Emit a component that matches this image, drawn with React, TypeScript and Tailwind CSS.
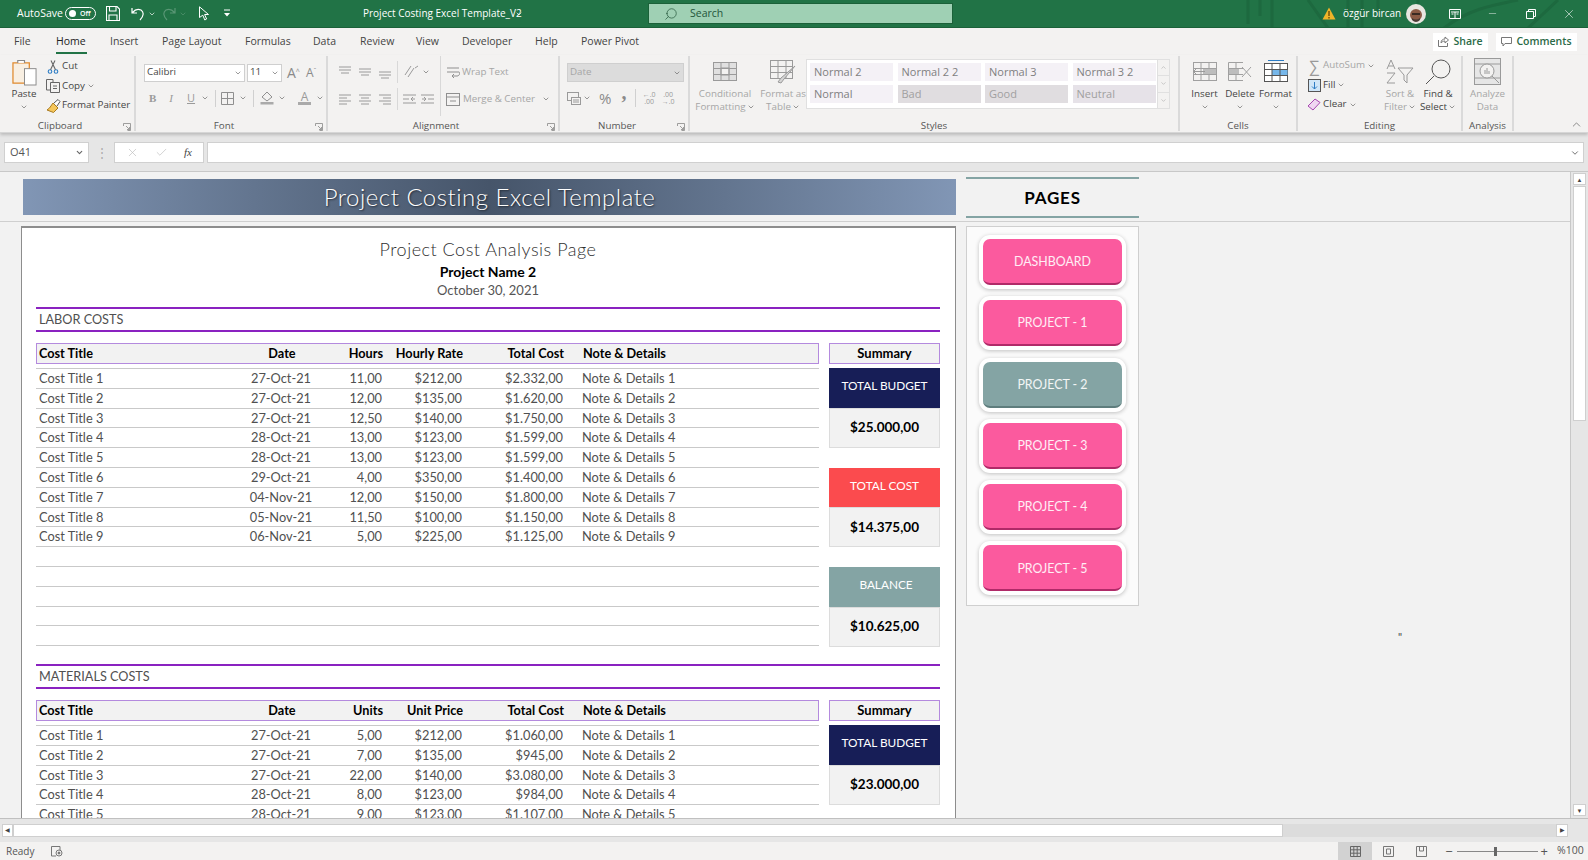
import React from "react";
import { ChevronDown, ChevronUp, Search, Minus, X, Check } from "lucide-react";

const labor = [
  ["Cost Title 1","27-Oct-21","11,00","$212,00","$2.332,00","Note & Details 1"],
  ["Cost Title 2","27-Oct-21","12,00","$135,00","$1.620,00","Note & Details 2"],
  ["Cost Title 3","27-Oct-21","12,50","$140,00","$1.750,00","Note & Details 3"],
  ["Cost Title 4","28-Oct-21","13,00","$123,00","$1.599,00","Note & Details 4"],
  ["Cost Title 5","28-Oct-21","13,00","$123,00","$1.599,00","Note & Details 5"],
  ["Cost Title 6","29-Oct-21","4,00","$350,00","$1.400,00","Note & Details 6"],
  ["Cost Title 7","04-Nov-21","12,00","$150,00","$1.800,00","Note & Details 7"],
  ["Cost Title 8","05-Nov-21","11,50","$100,00","$1.150,00","Note & Details 8"],
  ["Cost Title 9","06-Nov-21","5,00","$225,00","$1.125,00","Note & Details 9"],
  ["","","","","",""],["","","","","",""],["","","","","",""],["","","","","",""],["","","","","",""],
];
const materials = [
  ["Cost Title 1","27-Oct-21","5,00","$212,00","$1.060,00","Note & Details 1"],
  ["Cost Title 2","27-Oct-21","7,00","$135,00","$945,00","Note & Details 2"],
  ["Cost Title 3","27-Oct-21","22,00","$140,00","$3.080,00","Note & Details 3"],
  ["Cost Title 4","28-Oct-21","8,00","$123,00","$984,00","Note & Details 4"],
  ["Cost Title 5","28-Oct-21","9,00","$123,00","$1.107,00","Note & Details 5"],
];
const gridCols = "grid grid-cols-[204px_82px_60px_80px_101px_256px]";

const Chev = ({ className = "" }: { className?: string }) => (
  <ChevronDown size={8} strokeWidth={2} className={"text-[#666] " + className} />
);

const Launcher = () => (
  <svg width="8" height="8" viewBox="0 0 8 8" className="absolute right-[3px] bottom-[0px] text-[#888]" fill="none" stroke="currentColor" strokeWidth="0.8">
    <path d="M0.5 3V0.5H7.5V7.5H4.5M3 3L6.5 6.5M6.5 4V6.5H4" />
  </svg>
);

function Group({ w, label, launcher, children }: { w: string; label: string; launcher?: boolean; children: React.ReactNode }) {
  return (
    <div className={`${w} relative shrink-0 flex flex-col border-r-2 border-[#dadada] my-[1px]`}>
      <div className="flex-1 min-h-0 flex">{children}</div>
      <div className={`h-[15px] text-center text-[9.8px] leading-[20px] text-[#555] ${launcher ? "pr-[14px]" : ""}`}>{label}</div>
      {launcher && <Launcher />}
    </div>
  );
}

function Lines({ kind }: { kind: "left" | "center" | "right" | "top" | "mid" | "bot" }) {
  const d = {
    left: "M1 3H13M1 6H9M1 9H13M1 12H9",
    center: "M1 3H13M3 6H11M1 9H13M3 12H11",
    right: "M1 3H13M5 6H13M1 9H13M5 12H13",
    top: "M1 2H13M1 5H13M3 8H11",
    mid: "M1 4H13M1 7H13M3 10H11",
    bot: "M1 7H13M1 10H13M3 13H11",
  }[kind];
  return (
    <svg width="14" height="15" viewBox="0 0 14 15" fill="none" stroke="#9a9a9a" strokeWidth="1"><path d={d} /></svg>
  );
}

function TitleBar() {
  return (
    <div className="relative h-[28px] shrink-0 bg-[#217346] flex items-center text-white text-[10.5px] border-b border-[#1b6139] overflow-hidden">
      <svg width="340" height="28" viewBox="0 0 340 28" className="absolute right-[10px] top-0" fill="none" stroke="#1d693f" strokeWidth="3">
        <path d="M10 0V24M22 0V16M34 0V28M70 0L90 28M110 0V28M124 0V28M140 0V20M180 0V28M206 28C230 10 250 6 280 0M290 28L320 0" />
      </svg>
      <span className="ml-[17px] w-[48px]">AutoSave</span>
      <div className="w-[31px] h-[13px] rounded-full border border-white flex items-center pl-[3px] gap-[4px]">
        <div className="w-[7px] h-[7px] rounded-full bg-white" />
        <span className="text-[7px] leading-none font-semibold">Off</span>
      </div>
      <svg className="ml-[10px]" width="14" height="15" viewBox="0 0 14 15" fill="none" stroke="#fff" strokeWidth="1.1">
        <path d="M0.5 0.5H11L13.5 3V14.5H0.5ZM3.5 0.5V5H10V0.5M3 14.5V9H11V14.5" />
      </svg>
      <svg className="ml-[11px]" width="14" height="14" viewBox="0 0 14 14" fill="none" stroke="#fff" strokeWidth="1.2">
        <path d="M1 1V6H6M1.5 5.5C4 2.5 7 1.5 10 3C13 5 13 9 9 13" />
      </svg>
      <Chev className="ml-[3px] !text-white" />
      <svg className="ml-[6px] opacity-25" width="14" height="14" viewBox="0 0 14 14" fill="none" stroke="#fff" strokeWidth="1.2">
        <path d="M13 1V6H8M12.5 5.5C10 2.5 7 1.5 4 3C1 5 1 9 5 13" />
      </svg>
      <Chev className="ml-[3px] !text-white opacity-25" />
      <svg className="ml-[11px]" width="12" height="15" viewBox="0 0 12 15" fill="none" stroke="#fff" strokeWidth="1">
        <path d="M1.5 0.8L10.5 8.5H6.6L8.6 13L6.8 14L4.8 9.2L1.5 11.5Z" />
      </svg>
      <svg className="ml-[13px]" width="8" height="9" viewBox="0 0 8 9" fill="#fff"><path d="M1 0.5H7V1.5H1ZM1 4H7L4 7.5Z" /></svg>
      <span className="ml-[132px] w-[152px] text-[10px] whitespace-nowrap">Project Costing Excel Template_V2</span>
      <Chev className="!text-white" />
      <div className="ml-[125px] w-[305px] h-[21px] bg-[#9fd0b4] border border-[#1b6139] flex items-center text-[#23553a]">
        <Search size={14} strokeWidth={1.2} className="ml-[15px] -scale-x-100" />
        <span className="ml-[12px] text-[10.5px]">Search</span>
      </div>
      <svg className="ml-[369px] relative" width="14" height="13" viewBox="0 0 14 13"><path d="M7 0.5L13.5 12.5H0.5Z" fill="#f0b429" /><path d="M7 4V9M7 10V11.5" stroke="#5a3d00" strokeWidth="1.2" /></svg>
      <span className="ml-[7px] w-[55px] relative whitespace-nowrap text-[10px]">özgür bircan</span>
      <svg className="ml-[8px] relative" width="20" height="20" viewBox="0 0 20 20">
        <circle cx="10" cy="10" r="10" fill="#e8e6e0" />
        <circle cx="10" cy="11" r="6" fill="#8a5a44" />
        <rect x="6" y="9" width="8" height="2" fill="#3a2a22" />
        <path d="M6 14Q10 17 14 14L14 16Q10 20 6 16Z" fill="#4a3a33" />
      </svg>
      <svg className="ml-[23px] relative" width="12" height="10" viewBox="0 0 12 10" fill="none" stroke="#fff"><path d="M0.5 0.5H11.5V9.5H0.5ZM6 3V9M2 3H10" /><path d="M2.5 5H4.5M7.5 5H9.5" /></svg>
      <Minus size={11} strokeWidth={1} className="ml-[26px] relative" />
      <svg className="ml-[28px] relative" width="10" height="10" viewBox="0 0 10 10" fill="none" stroke="#fff"><path d="M0.5 2.5H7.5V9.5H0.5ZM2.5 2.5V0.5H9.5V7.5H7.5" /></svg>
      <X size={14} strokeWidth={1} className="ml-[26px] relative" />
    </div>
  );
}

function Tabs() {
  const tabs = [
    ["File", "w-[42px]"], ["Home", "w-[54px]"], ["Insert", "w-[52px]"], ["Page Layout", "w-[83px]"], ["Formulas", "w-[68px]"],
    ["Data", "w-[47px]"], ["Review", "w-[56px]"], ["View", "w-[46px]"], ["Developer", "w-[73px]"], ["Help", "w-[46px]"], ["Power Pivot", "w-[80px]"],
  ];
  return (
    <div className="h-[27px] shrink-0 bg-[#f3f2f1] flex items-center pl-[14px] pr-[11px] text-[10.5px] text-[#444]">
      {tabs.map(([t, w]) => (
        <div key={t} className={`${w} h-full relative flex items-center`}>
          <span className={t === "Home" ? "text-[#222] font-medium" : ""}>{t}</span>
          {t === "Home" && <div className="absolute left-0 bottom-[1px] w-[31px] h-[2px] bg-[#217346]" />}
        </div>
      ))}
      <div className="flex-1" />
      <div className="w-[55px] h-[18px] bg-white flex items-center justify-center gap-[4px] text-[#2a6a47] text-[10.5px] font-semibold">
        <svg width="11" height="11" viewBox="0 0 11 11" fill="none" stroke="#777"><path d="M0.5 4V10.5H9.5V7M3 7C3 4 5 3 7 3V1L10.5 4L7 7V5C5 5 4 6 3 7Z" /></svg>
        Share
      </div>
      <div className="ml-[8px] w-[81px] h-[18px] bg-white flex items-center justify-center gap-[4px] text-[#2a6a47] text-[10.5px] font-semibold">
        <svg width="11" height="10" viewBox="0 0 11 10" fill="none" stroke="#777"><path d="M0.5 0.5H10.5V6.5H4L2 9V6.5H0.5Z" /></svg>
        Comments
      </div>
    </div>
  );
}

function SmallBtn({ icon, label, chev, grey }: { icon: React.ReactNode; label: string; chev?: boolean; grey?: boolean }) {
  return (
    <div className={`flex items-center h-[19.5px] ${grey ? "text-[#a6a6a6]" : "text-[#444]"}`}>
      <span className="w-[16px] flex justify-center">{icon}</span>
      <span className="ml-[1px] whitespace-nowrap">{label}</span>
      {chev && <Chev className="ml-[2px]" />}
    </div>
  );
}

function BigBtn({ w, icon, l1, l2, grey, noChev }: { w: string; icon: React.ReactNode; l1: string; l2: string; grey?: boolean; noChev?: boolean }) {
  return (
    <div className={`${w} flex flex-col items-center text-center leading-[13px] ${grey ? "text-[#a6a6a6]" : "text-[#444]"}`}>
      <div className="h-[29px] flex items-center justify-center">{icon}</div>
      <div className="mt-[1px] whitespace-nowrap">{l1}</div>
      <div className="whitespace-nowrap flex items-center justify-center h-[13px]">{l2}{!noChev && <Chev className={l2 ? "ml-[1px]" : ""} />}</div>
    </div>
  );
}

function Ribbon() {
  const styleCells = [
    ["Normal 2", "bg-[#f4f1f6]"], ["Normal 2 2", "bg-[#f4f1f6]"], ["Normal 3", "bg-[#f4f1f6]"], ["Normal 3 2", "bg-[#f4f1f6]"],
    ["Normal", "bg-[#f4f1f6]"], ["Bad", "bg-[#e0dde0]"], ["Good", "bg-[#e0dde0]"], ["Neutral", "bg-[#e6e2e8]"],
  ];
  return (
    <div className="relative h-[78px] shrink-0 bg-[#f3f2f1] flex text-[9.8px] text-[#444] border-b border-[#d6d6d6] shadow-[0_2px_3px_rgba(0,0,0,0.18)] z-10">
      <Group w="w-[136px]" label="Clipboard" launcher>
        <div className="w-[44px] pl-[4px] flex flex-col items-center leading-[13px]">
          <svg className="mt-[3px] ml-[1px]" width="25" height="27" viewBox="0 0 26 28" fill="none">
            <path d="M1 4H18V25H1Z" stroke="#e08a2e" strokeWidth="1.3" fill="#f8efe2" />
            <path d="M6 4V1.5H13V4" stroke="#888" strokeWidth="1.2" fill="#fff" />
            <rect x="13" y="10" width="12" height="17" fill="#fff" stroke="#8a8a8a" />
          </svg>
          <span className="mt-[1px]">Paste</span>
          <Chev className="mt-[3px]" />
        </div>
        <div className="ml-[1px] pt-[1px] flex flex-col">
          <SmallBtn label="Cut" icon={<svg width="12" height="14" viewBox="0 0 12 14" fill="none" stroke="#2c7cc4" strokeWidth="1.1"><circle cx="3" cy="11.5" r="1.8" /><circle cx="9" cy="11.5" r="1.8" /><path d="M3.5 9.8L8 0.5M8.5 9.8L4 0.5" stroke="#666" /></svg>} />
          <SmallBtn label="Copy" chev icon={<svg width="14" height="14" viewBox="0 0 14 14" fill="none" stroke="#666"><path d="M0.5 0.5H7V11H0.5Z" /><path d="M4.5 3.5H13.5V13.5H4.5Z" fill="#f3f2f1" /><path d="M7 7H11M7 9.5H11" /></svg>} />
          <SmallBtn label="Format Painter" icon={<svg width="15" height="14" viewBox="0 0 15 14"><path d="M7 4L12 9L7.5 13.5L1 11L3.5 9Z" fill="#f5c65a" stroke="#a87a20" /><path d="M8 4L12 0.5L14 2.5L11 7" fill="#fff" stroke="#555" /></svg>} />
        </div>
      </Group>

      <Group w="w-[192px]" label="Font" launcher>
        <div className="flex-1 pl-[8px] pt-[7px] flex flex-col">
          <div className="flex items-center h-[19px]">
            <div className="w-[101px] h-[18px] bg-white border border-[#cfcfcf] flex items-center justify-between px-[2px]">Calibri<Chev /></div>
            <div className="ml-[2px] w-[35px] h-[18px] bg-white border border-[#cfcfcf] flex items-center justify-between px-[2px]">11<Chev /></div>
            <span className="ml-[5px] text-[14px] text-[#8a8a8a] leading-none">A<sup className="text-[7px]">^</sup></span>
            <span className="ml-[6px] text-[12px] text-[#8a8a8a] leading-none">A<sup className="text-[7px]">ˇ</sup></span>
          </div>
          <div className="flex items-center h-[22px] mt-[5px] text-[#9a9a9a] text-[11px]">
            <span className="ml-[5px] font-bold font-['Liberation_Serif']">B</span>
            <span className="ml-[13px] italic font-['Liberation_Serif']">I</span>
            <span className="ml-[14px] underline">U</span>
            <Chev className="ml-[6px]" />
            <div className="ml-[6px] w-px h-[17px] bg-[#d0d0d0]" />
            <svg className="ml-[5px]" width="13" height="13" viewBox="0 0 13 13" fill="none" stroke="#8f8f8f"><path d="M0.5 0.5H12.5V12.5H0.5ZM6.5 0.5V12.5M0.5 6.5H12.5" /></svg>
            <Chev className="ml-[5px]" />
            <div className="ml-[6px] w-px h-[17px] bg-[#d0d0d0]" />
            <svg className="ml-[6px]" width="14" height="14" viewBox="0 0 14 14" fill="none" stroke="#8f8f8f"><path d="M7 1L12 6L7 10L2 6Z" /><rect x="0.5" y="11" width="13" height="2.5" fill="#aaa" stroke="none" /></svg>
            <Chev className="ml-[4px]" />
            <div className="ml-[12px] flex flex-col items-center leading-[10px]"><span className="text-[12px]">A</span><div className="w-[13px] h-[3px] bg-[#aaa]" /></div>
            <Chev className="ml-[5px]" />
          </div>
        </div>
      </Group>

      <Group w="w-[232px]" label="Alignment" launcher>
        <div className="pl-[10px] pt-[5px] flex flex-col">
          <div className="flex items-center gap-[6px] h-[22px]"><Lines kind="top" /><Lines kind="mid" /><Lines kind="bot" /></div>
          <div className="flex items-center gap-[6px] h-[22px] mt-[5px]"><Lines kind="left" /><Lines kind="center" /><Lines kind="right" /></div>
        </div>
        <div className="pl-[5px] pt-[5px] flex flex-col">
          <div className="flex items-center h-[22px] border-l border-[#d8d8d8] pl-[5px] text-[#a0a0a0] text-[12px]">
            <svg width="16" height="14" viewBox="0 0 16 14" fill="none" stroke="#9a9a9a"><path d="M2 10L8 1M5 12L11 3M12 3L15 1" /></svg><Chev className="ml-[3px]" />
          </div>
          <div className="flex items-center h-[22px] mt-[5px] border-l border-[#d8d8d8] pl-[5px] gap-[5px]">
            <svg width="13" height="13" viewBox="0 0 13 13" fill="none" stroke="#9a9a9a"><path d="M0 2H13M0 6H6M0 10H13M12 6H8L10 4M8 6L10 8" /></svg>
            <svg width="13" height="13" viewBox="0 0 13 13" fill="none" stroke="#9a9a9a"><path d="M0 2H13M7 6H13M0 10H13M1 6H5L3 4M5 6L3 8" /></svg>
          </div>
        </div>
        <div className="ml-[6px] pl-[5px] pt-[5px] flex flex-col border-l border-[#d8d8d8] h-[60px] text-[#a6a6a6]">
          <div className="h-[22px] flex items-center gap-[2px]">
            <svg width="14" height="14" viewBox="0 0 14 14" fill="none" stroke="#8f8f8f"><path d="M1 3H13M1 7H13C14 7 14 11 11 11H7M8 9L6 11L8 13" /></svg>
            <span>Wrap Text</span>
          </div>
          <div className="h-[22px] mt-[5px] flex items-center gap-[3px]">
            <svg width="14" height="13" viewBox="0 0 14 13" fill="none" stroke="#8f8f8f"><rect x="0.5" y="0.5" width="13" height="12" /><path d="M0 4H14M4 8H10" /></svg>
            <span className="whitespace-nowrap">Merge &amp; Center</span><Chev className="ml-[4px]" />
          </div>
        </div>
      </Group>

      <Group w="w-[130px]" label="Number" launcher>
        <div className="flex-1 pl-[7px] pt-[7px] flex flex-col">
          <div className="w-[117px] h-[19px] bg-[#dcdcdc] border border-[#cfcfcf] flex items-center justify-between px-[2px] text-[#a6a6a6]">Date<Chev /></div>
          <div className="flex items-center h-[22px] mt-[5px] text-[#8a8a8a]">
            <svg width="14" height="13" viewBox="0 0 14 13" fill="none" stroke="#9a9a9a"><rect x="0.5" y="0.5" width="11" height="8" /><rect x="4.5" y="5.5" width="9" height="7" fill="#f3f2f1" /><path d="M6 8H12M6 10H12" /></svg>
            <Chev className="ml-[2px]" />
            <span className="ml-[8px] text-[15px] leading-none">%</span>
            <span className="ml-[9px] text-[20px] h-[14px] leading-[24px] font-bold font-['Liberation_Serif']">’</span>
            <div className="ml-[8px] w-px h-[18px] bg-[#d0d0d0]" />
            <span className="ml-[5px] text-[7px] leading-[7px] w-[16px] text-center text-[#999]">←.0<br />.00</span>
            <span className="ml-[3px] text-[7px] leading-[7px] w-[16px] text-center text-[#999]">.00<br />→.0</span>
          </div>
        </div>
      </Group>

      <Group w="w-[490px]" label="Styles">
        <div className="w-[70px] pt-[1px]">
          <BigBtn w="w-full" grey l1="Conditional" l2="Formatting" icon={
            <svg width="24" height="19" viewBox="0 0 24 19" fill="#e0e0e0" stroke="#9a9a9a"><rect x="0.5" y="0.5" width="23" height="18" /><rect x="8" y="6" width="8" height="7" fill="#f3f2f1" /><path d="M0 6.5H24M0 12.5H24M8 0V19M16 0V19" fill="none" /></svg>
          } />
        </div>
        <div className="w-[46px] pt-[1px]">
          <BigBtn w="w-full" grey l1="Format as" l2="Table" icon={
            <svg width="26" height="24" viewBox="0 0 26 24" fill="none" stroke="#9a9a9a"><rect x="0.5" y="0.5" width="22" height="18" fill="#f3f2f1" /><path d="M0 6.5H23M0 12.5H23M8 0V19M16 0V19" /><path d="M25 6L14 19L11 23L8 22L11 18Z" fill="#d5d5d5" /></svg>
          } />
        </div>
        <div className="w-[364px] h-[50px] mt-[3px] bg-white border border-[#e0e0e0] grid grid-cols-[83px_83px_83px_83px] gap-x-[4.5px] gap-y-[4px] pl-[3px] pt-[3px] content-start text-[#7f7f7f] text-[11px] relative">
          {styleCells.map(([t, c]) => (
            <div key={t} className={`${c} h-[18px] flex items-center pl-[4px] ${t === "Bad" || t === "Good" || t === "Neutral" ? "text-[#a0a0a0]" : ""}`}>{t}</div>
          ))}
          <div className="absolute right-0 top-0 bottom-0 w-[12px] border-l border-[#e0e0e0] flex flex-col bg-[#f3f2f1]">
            <div className="flex-1 border-b border-[#e0e0e0] flex items-center justify-center"><ChevronUp size={7} className="text-[#aaa]" /></div>
            <div className="flex-1 border-b border-[#e0e0e0] flex items-center justify-center"><ChevronDown size={7} className="text-[#aaa]" /></div>
            <div className="flex-1 flex items-center justify-center"><ChevronDown size={7} className="text-[#aaa]" /></div>
          </div>
        </div>
      </Group>

      <Group w="w-[118px]" label="Cells">
        <div className="pl-[7px] pt-[1px] flex">
          <BigBtn w="w-[35px]" l1="Insert" l2="" icon={
            <svg width="24" height="19" viewBox="0 0 24 19" fill="none" stroke="#a0a0a0"><rect x="0.5" y="0.5" width="23" height="18" /><path d="M0 6.5H24M0 12.5H24M8 0V19M16 0V19" /><rect x="10" y="7" width="13" height="5" fill="#bdbdbd" stroke="none" /><path d="M12 9.5H1M4 6L0.5 9.5L4 13" stroke="#9a9a9a" /></svg>
          } />
          <BigBtn w="w-[36px]" l1="Delete" l2="" icon={
            <svg width="24" height="19" viewBox="0 0 24 19" fill="none" stroke="#a0a0a0"><path d="M15 0.5H0.5V18.5H15M0 6.5H15M0 12.5H15M8 0V19" /><rect x="1" y="7" width="10" height="5" fill="#bdbdbd" stroke="none" /><path d="M14 5L23 15M23 5L14 15" /></svg>
          } />
          <BigBtn w="w-[35px]" l1="Format" l2="" icon={
            <svg width="24" height="23" viewBox="0 0 24 23" fill="none" stroke="#555"><path d="M4 0.5H20" stroke="#2c7cc4" /><rect x="0.5" y="3.5" width="23" height="18" fill="#fff" /><rect x="8" y="9" width="15.5" height="6" fill="#76b7ea" stroke="none" /><path d="M0 9.5H24M0 15.5H24M8 3V22M16 3V22" /></svg>
          } />
        </div>
      </Group>

      <Group w="w-[165px]" label="Editing">
        <div className="pl-[8px] pt-[0px] w-[84px] flex flex-col">
          <SmallBtn grey chev label="AutoSum" icon={<span className="text-[16px] text-[#999] leading-none">∑</span>} />
          <SmallBtn chev label="Fill" icon={<svg width="13" height="13" viewBox="0 0 13 13" fill="#cfe6f8" stroke="#555"><rect x="0.5" y="0.5" width="12" height="12" /><path d="M6.5 3V10M4 7.5L6.5 10L9 7.5" fill="none" stroke="#2c7cc4" /></svg>} />
          <SmallBtn chev label="Clear" icon={<svg width="14" height="13" viewBox="0 0 14 13" fill="#f0d7f2" stroke="#a646b0"><path d="M1 8L8 1L13 4.5L6 12Z" /></svg>} />
        </div>
        <div className="pt-[1px] w-[36px]"><BigBtn w="w-full" grey l1="Sort &" l2="Filter" icon={<svg width="28" height="26" viewBox="0 0 28 26" fill="none" stroke="#9a9a9a"><path d="M1 10L5 1L9 10M2.5 7H7.5M1 14H9L1 24H9" /><path d="M12 9H27L21 16V24L18 21V16Z" /></svg>} /></div>
        <div className="pt-[1px] w-[40px]"><BigBtn w="w-full" l1="Find &" l2="Select" icon={<svg width="26" height="26" viewBox="0 0 26 26" fill="none" stroke="#555"><circle cx="16" cy="10" r="9" /><path d="M9 17L1 25" /></svg>} /></div>
      </Group>

      <Group w="w-[51px]" label="Analysis">
        <div className="pt-[1px] w-full"><BigBtn w="w-full" grey noChev l1="Analyze" l2="Data" icon={<svg width="27" height="27" viewBox="0 0 27 27" fill="#e6e6e6" stroke="#9a9a9a"><rect x="0.5" y="0.5" width="26" height="26" /><path d="M0 6H27M0 20H27" /><circle cx="13" cy="13" r="7" fill="#f3f2f1" /><path d="M11 16V12M13 16V10M15 16V13M18 18L25 25" fill="none" /></svg>} /></div>
      </Group>
      <ChevronUp size={13} strokeWidth={1.2} className="absolute right-[5px] bottom-[1px] text-[#555]" />
    </div>
  );
}

function FormulaBar() {
  return (
    <div className="h-[38px] shrink-0 bg-[#e6e6e6] flex items-start pt-[9px] pl-[4px] pr-[4px] text-[#555]">
      <div className="w-[85px] h-[21px] bg-white border border-[#d0d0d0] flex items-center justify-between pl-[5px] pr-[4px] text-[11px]">O41<ChevronDown size={9} strokeWidth={3} className="text-[#666]" /></div>
      <div className="w-[25px] h-[21px] flex items-center justify-center text-[#aaa] text-[12px]">⋮</div>
      <div className="w-[90px] h-[21px] bg-white border border-[#d0d0d0] flex items-center justify-around px-[3px]">
        <X size={13} strokeWidth={1.2} className="text-[#bbb]" />
        <Check size={13} strokeWidth={1.2} className="text-[#bbb]" />
        <span className="text-[11px] italic font-['Liberation_Serif'] text-[#444]">fx</span>
      </div>
      <div className="ml-[3px] flex-1 h-[21px] bg-white border border-[#d0d0d0] flex items-center justify-end pr-[3px]"><ChevronDown size={10} strokeWidth={2} className="text-[#555]" /></div>
    </div>
  );
}

function Section({ name, second, third, rows, summary }: { name: string; second: string; third: string; rows: string[][]; summary: React.ReactNode }) {
  return (
    <div className="text-[12.8px] text-[#505050]">
      <div className="h-[24.5px] border-y-2 border-[#8a22c0] flex items-center pl-[3px] text-[12.7px]">{name}</div>
      <div className="flex gap-[10px] mt-[11.5px]">
        <div className="w-[783px]">
          <div className={`${gridCols} h-[21px] border border-[#b48ade] bg-[#f2f2f2] items-center font-bold text-black text-[12.7px]`}>
            <span className="pl-[2px]">Cost Title</span>
            <span className="text-center">Date</span>
            <span className="text-right">{second}</span>
            <span className="text-right">{third}</span>
            <span className="text-right">Total Cost</span>
            <span className="pl-[19px]">Note &amp; Details</span>
          </div>
          <div className="mt-[4px] border-t border-[#c9c9c9]">
            {rows.map((r, i) => (
              <div key={i} className={`${gridCols} h-[19.8px] leading-[19px] border-b border-[#c9c9c9] items-center whitespace-nowrap`}>
                <span className="pl-[3px]">{r[0]}</span>
                <span className="text-center">{r[1]}</span>
                <span className="text-right">{r[2]}</span>
                <span className="text-right">{r[3]}</span>
                <span className="text-right">{r[4]}</span>
                <span className="pl-[19px]">{r[5]}</span>
              </div>
            ))}
          </div>
        </div>
        <div className="w-[111px]">
          <div className="h-[21px] border border-[#b48ade] bg-[#f2f2f2] flex items-center justify-center font-bold text-black text-[13px]">Summary</div>
          <div className="mt-[4px] flex flex-col">{summary}</div>
        </div>
      </div>
    </div>
  );
}

function SumBlock({ label, value, c, gap }: { label: string; value: string; c: string; gap?: boolean }) {
  return (
    <div className={gap ? "mb-[20px]" : ""}>
      <div className={`${c} h-[39.5px] pb-[3px] flex items-center justify-center text-white text-[11.8px] whitespace-nowrap`}>{label}</div>
      <div className="h-[40px] bg-[#f2f2f2] border border-[#dcdcdc] flex items-center justify-center font-bold text-black text-[13.5px]">{value}</div>
    </div>
  );
}

function NavButton({ label, teal }: { label: string; teal?: boolean }) {
  return (
    <div className={`w-[139px] h-[46px] shrink-0 rounded-[7px] pt-[3px] flex items-center justify-center text-white/90 text-[12.4px] ring-[4px] ring-white border-b-2 shadow-[0_1px_4px_4px_rgba(0,0,0,0.24)] ${teal ? "bg-[#84a4a4] border-[#5e7d7d]" : "bg-[#fb5a9e] border-[#b02a68]"}`}>
      {label}
    </div>
  );
}

function Sheet() {
  return (
    <div className="flex-1 min-h-0 flex border-t border-[#c8c8c8] bg-[#f2f2f2] font-['Lato',sans-serif]">
      <div className="flex-1 min-w-0 overflow-hidden flex flex-col">
        <div className="h-[50px] shrink-0 flex border-b border-[#cfcfcf] pl-[23px]">
          <div className="mt-[7px] w-[933px] h-[36px] bg-gradient-to-r from-[#8196b5] via-[#46556a] to-[#8196b5] flex items-center justify-center text-white text-[24px] font-light tracking-[0.5px] [text-shadow:1px_1px_2px_rgba(0,0,0,0.6)]">Project Costing Excel Template</div>
          <div className="ml-[10px] mt-[5px] w-[173px] h-[41px] border-y-2 border-[#84a4a4] flex items-center justify-center font-bold text-black text-[17px] tracking-[0.8px]">PAGES</div>
        </div>
        <div className="flex-1 min-h-0 flex pl-[21px] pt-[4px] gap-[10px]">
          <div className="w-[935px] h-[700px] shrink-0 bg-white border-t-2 border-x border-[#8d8d8d] pl-[14px] pr-[15px]">
            <div className="h-[79px] flex flex-col items-center justify-start">
              <div className="mt-[9px] h-[25px] flex items-center text-[18px] font-light text-[#2f2f2f] tracking-[0.5px]">Project Cost Analysis Page</div>
              <div className="h-[19px] flex items-center font-bold text-[14px] text-black">Project Name 2</div>
              <div className="h-[20px] flex items-center text-[13px] text-[#555]">October 30, 2021</div>
            </div>
            <Section name="LABOR COSTS" second="Hours" third="Hourly Rate" rows={labor} summary={
              <>
                <SumBlock label="TOTAL BUDGET" value="$25.000,00" c="bg-[#171e57]" gap />
                <SumBlock label="TOTAL COST" value="$14.375,00" c="bg-[#fb4b4e]" gap />
                <SumBlock label="BALANCE" value="$10.625,00" c="bg-[#84a4a4] pl-[3px]" />
              </>
            } />
            <div className="h-[17.5px]" />
            <Section name="MATERIALS COSTS" second="Units" third="Unit Price" rows={materials} summary={
              <SumBlock label="TOTAL BUDGET" value="$23.000,00" c="bg-[#171e57]" />
            } />
          </div>
          <div className="w-[173px] h-[380px] shrink-0 bg-white/70 border border-[#cfcfcf] flex flex-col items-center gap-[15.3px] pt-[12px]">
            {["DASHBOARD", "PROJECT - 1", "PROJECT - 2", "PROJECT - 3", "PROJECT - 4", "PROJECT - 5"].map((p) => (
              <NavButton key={p} label={p} teal={p === "PROJECT - 2"} />
            ))}
          </div>
          <div className="relative w-0"><span className="absolute left-[249px] top-[403px] text-[11px] text-[#444]">"</span></div>
        </div>
      </div>
      <div className="w-[18px] shrink-0 bg-[#e6e6e6] border-l border-[#c8c8c8] flex flex-col items-center pt-[1px]">
        <div className="w-[13px] h-[12px] bg-white border border-[#cfcfcf] flex items-center justify-center text-[6px] text-[#444]">▲</div>
        <div className="w-[13px] h-[235px] bg-white border border-[#cfcfcf] mt-[1px]" />
        <div className="flex-1" />
        <div className="w-[13px] h-[12px] mb-[2px] bg-white border border-[#cfcfcf] flex items-center justify-center text-[6px] text-[#444]">▼</div>
      </div>
    </div>
  );
}

function HScroll() {
  return (
    <div className="h-[24px] shrink-0 bg-[#e6e6e6] border-t border-[#c0c0c0] flex items-center pl-[2px] pr-[20px]">
      <div className="w-[11px] h-[13px] bg-white border border-[#cfcfcf] flex items-center justify-center text-[6px] text-[#444]">◀</div>
      <div className="w-[1270px] h-[13px] bg-white border border-[#cfcfcf]" />
      <div className="flex-1 h-[13px] bg-[#dcdcdc]" />
      <div className="w-[12px] h-[13px] bg-white border border-[#cfcfcf] flex items-center justify-center text-[6px] text-[#444]">▶</div>
    </div>
  );
}

function StatusBar() {
  return (
    <div className="h-[18px] shrink-0 bg-[#f3f2f1] flex items-center text-[10px] text-[#555] pl-[6px]">
      <span>Ready</span>
      <svg className="ml-[17px]" width="12" height="11" viewBox="0 0 12 11" fill="none" stroke="#777"><path d="M0.5 0.5H9V4M0.5 0.5V10H5" /><circle cx="8" cy="7" r="3" /><circle cx="8" cy="7" r="1" fill="#555" /></svg>
      <div className="flex-1" />
      <div className="w-[34px] h-full bg-[#d2d2d2] flex items-center justify-center">
        <svg width="11" height="11" viewBox="0 0 11 11" fill="none" stroke="#666"><path d="M0.5 0.5H10.5V10.5H0.5ZM3.8 0V11M7.2 0V11M0 3.8H11M0 7.2H11" /></svg>
      </div>
      <div className="w-[33px] flex justify-center"><svg width="11" height="11" viewBox="0 0 11 11" fill="none" stroke="#777"><path d="M0.5 0.5H10.5V10.5H0.5ZM3.5 3H7.5V8H3.5Z" /></svg></div>
      <div className="w-[33px] flex justify-center"><svg width="11" height="11" viewBox="0 0 11 11" fill="none" stroke="#777"><path d="M0.5 0.5H10.5V10.5H0.5ZM3.5 0.5V5H7.5V0.5" /></svg></div>
      <span className="ml-[7px] text-[13px] leading-none">−</span>
      <div className="relative ml-[4px] w-[81px] h-px bg-[#888]"><div className="absolute left-[37px] -top-[4px] w-[3px] h-[9px] bg-[#666]" /></div>
      <span className="ml-[3px] text-[13px] leading-none">+</span>
      <span className="ml-[9px] w-[31px] text-[10.5px]">%100</span>
    </div>
  );
}

export default function App() {
  return (
    <div className="w-[1588px] h-[860px] overflow-hidden flex flex-col bg-white font-['Open_Sans',sans-serif]">
      <TitleBar />
      <Tabs />
      <Ribbon />
      <FormulaBar />
      <Sheet />
      <HScroll />
      <StatusBar />
    </div>
  );
}
